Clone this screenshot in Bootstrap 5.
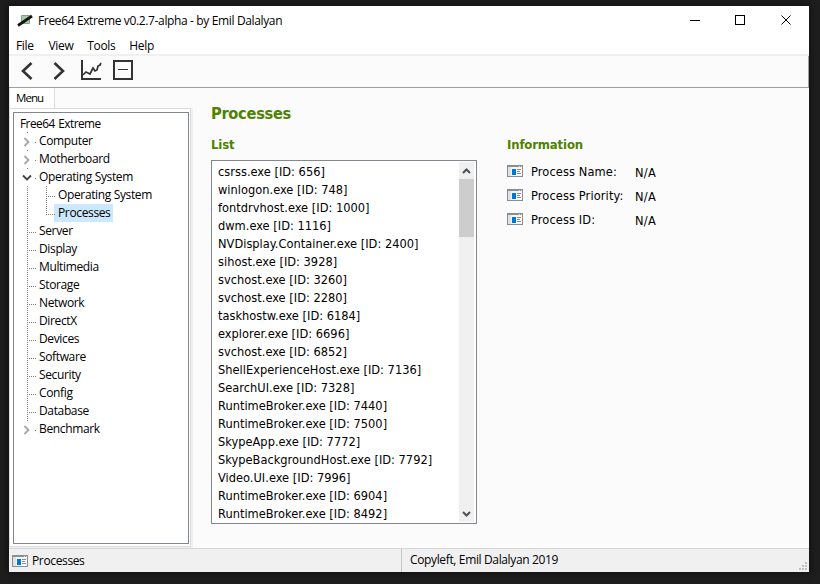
<!DOCTYPE html>
<html lang="en">
<head>
<meta charset="utf-8">
<title>Free64 Extreme</title>
<link href="https://cdn.jsdelivr.net/npm/bootstrap@5.3.0/dist/css/bootstrap.min.css" rel="stylesheet">
<style>
body{background:#1e1e1e;width:820px;height:584px;overflow:hidden;font:12px/18px "Open Sans","Noto Sans",sans-serif;letter-spacing:-.36px;color:#000}
svg{display:block;flex:none}
.app{width:800px;height:566px;margin:6px 0 0 9px;background:#fbfbfb;box-shadow:0 0 7px 1px #111}
.titlebar{height:30px;background:#fff;padding-left:8px}
.menubar{height:20px;background:#fff;border-bottom:2px solid #f0f0f0;padding-left:7px}
.menubar span{height:18px;margin-top:1px}
.m2{margin-left:15px}
.m3{margin-left:14px}
.m4{margin-left:14px}
.tools{height:32px;border-bottom:1px solid #a0a0a0;border-right:1px solid #a0a0a0}
.side{width:184px;background:#f0f0f0;height:460px}
.tabrow{height:20px;background:#fbfbfb}
.tab-menu{width:46px;height:20px;background:#fff;border-right:1px solid #dcdcdc;border-left:1px solid #dcdcdc;padding-left:6px;line-height:20px;font-size:11.5px;letter-spacing:-.95px}
.tab-menu{letter-spacing:-.95px}
.tabpage{width:182px;height:439px;background:#fff;border:1px solid #dcdcdc;padding:3px}
.tree{width:176px;height:432px;border:1px solid #828790;padding-top:1px;background:#fff}
.tree div{height:18px;padding-left:25px;white-space:nowrap}
.tree .root{padding-left:6px;font-size:11.800px;letter-spacing:-.5px;word-spacing:1px}
.tree .child{padding-left:40px}
.tree .child span{display:inline-block;padding:0 3px 0 4px;height:18px}
.tree .sel{background:#cce8ff}
.tree svg{left:0;top:0}
.tah{font-family:"DejaVu Sans Condensed","DejaVu Sans",sans-serif;font-stretch:condensed;font-size:12.700px;letter-spacing:.02px}
.green{color:#4f8200;font-family:"DejaVu Sans Condensed","DejaVu Sans",sans-serif;font-stretch:condensed;font-weight:700}
.h-main{font-size:16.300px;line-height:22px;letter-spacing:-.3px}
.h-sub{font-size:13px;line-height:18px;letter-spacing:-.15px}
.listh{margin:11px 0 6px}
.infoh{margin:33px 0 9px}
.content{padding:15px 0 0 18px}
.lst{width:266px;height:364px;border:1px solid #828790;background:#fff;padding:1px}
.lst .rows{padding:1px 0 0 5px;white-space:nowrap;overflow:hidden}
.sb{width:15px;background:#f0f0f0;margin-right:1px}
.thumb{height:58px;width:15px;background:#cdcdcd}
.info{margin-left:30px}
.info .rw{height:24px}
.info .lab{width:112px;padding-left:8px;white-space:nowrap;letter-spacing:.12px}
.ic{margin-top:2px}
.na{padding-top:1px;letter-spacing:.3px}
.status{height:24px;background:#f0f0f0;border-top:1px solid #d7d7d7}
.status .one{width:393px;border-right:1px solid #c8c8c8;padding-left:3px}
.two{padding-left:8px;line-height:22px}
</style>
<script src="https://cdn.jsdelivr.net/npm/bootstrap@5.3.0/dist/js/bootstrap.bundle.min.js"></script>
</head>
<body>
<svg width="0" height="0" class="position-absolute"><symbol id="win" viewBox="0 0 16 12"><path fill="#8a8d91" d="M0 0h16v12H0z"/><path fill="#f7f7f7" d="M1 2h14v9H1z"/><path fill="#dfe3e8" d="M1 2h3v9H1z"/><path fill="#d8d8d8" d="M12 1h1v1h-1zM14 1h1v1h-1z"/><path fill="#0078d7" d="M5 4h4v6H5z"/><path stroke="#8a8d91" d="M10 4.500h4M10 6.500h3M10 8.500h4"/></symbol></svg>
<div class="app d-flex flex-column">
  <header class="titlebar d-flex align-items-center">
    <svg width="17" height="14" viewBox="0 0 17 14"><path fill="#a9c8ae" stroke="#76a982" d="M4.500 1.500h8v8h-8z"/><path stroke="#151515" stroke-width="2.800" d="M1 11.500L15 2"/></svg>
    <span class="ms-1">Free64 Extreme v0.2.7-alpha - by Emil Dalalyan</span>
    <svg class="ms-auto" width="120" height="30" fill="none" stroke="#000" shape-rendering="crispEdges"><path d="M1 14.500h10M46.500 9.500h9v9h-9z"/><path shape-rendering="auto" d="M92.500 9.500l9 9m0-9l-9 9"/></svg>
  </header>
  <nav class="menubar d-flex"><span>File</span><span class="m2">View</span><span class="m3">Tools</span><span class="m4">Help</span></nav>
  <div class="tools">
    <svg width="140" height="31" fill="none" stroke="#333" stroke-width="2.600"><path d="M22.500 7l-8.500 8 8.500 8M45.500 7l8.500 8-8.500 8"/><path stroke="none" fill="#fff" d="M73 4h19v19H73z"/><path stroke-width="2" d="M73 4v19h19"/><path stroke-width="1.700" d="M74 19l3-3 2 1 2 1 3-6 2 3 2-1 1-4 2-1 1-2"/><path stroke-width="2" d="M105 5h18v18h-18z"/><path stroke-width="1" d="M109 13.500h10"/></svg>
  </div>
  <main class="d-flex">
    <aside class="side">
      <div class="tabrow"><div class="tab-menu">Menu</div></div>
      <div class="tabpage">
        <div class="tree position-relative">
          <svg class="position-absolute" width="50" height="430" fill="none" shape-rendering="crispEdges"><path stroke="#808080" stroke-dasharray="1 1" d="M13.500 19v2M13.500 37v2M13.500 55v2M13.500 73v236M32.500 73v29M34 83.500h7M34 101.500h7M21 29.500h1M21 47.500h1M21 65.500h1M21 317.500h1M15 119.500h7M15 137.500h7M15 155.500h7M15 173.500h7M15 191.500h7M15 209.500h7M15 227.500h7M15 245.500h7M15 263.500h7M15 281.500h7M15 299.500h7"/><g shape-rendering="auto" stroke-width="1.800" stroke="#a6a6a6"><path d="M10.500 25l4 4-4 4M10.500 43l4 4-4 4M10.500 313l4 4-4 4"/><path stroke="#404040" d="M9 62.500l4 4 4-4"/></g></svg>
          <div class="root">Free64 Extreme</div>
          <div>Computer</div><div>Motherboard</div><div>Operating System</div>
          <div class="child"><span>Operating System</span></div>
          <div class="child"><span class="sel">Processes</span></div>
          <div>Server</div><div>Display</div><div>Multimedia</div><div>Storage</div><div>Network</div><div>DirectX</div><div>Devices</div><div>Software</div><div>Security</div><div>Config</div><div>Database</div><div>Benchmark</div>
        </div>
      </div>
    </aside>
    <section class="content d-flex">
      <div>
        <div class="green h-main">Processes</div>
        <div class="green h-sub listh">List</div>
        <div class="lst tah d-flex">
          <div class="rows flex-grow-1">
            <div>csrss.exe [ID: 656]</div><div>winlogon.exe [ID: 748]</div><div>fontdrvhost.exe [ID: 1000]</div><div>dwm.exe [ID: 1116]</div><div>NVDisplay.Container.exe [ID: 2400]</div><div>sihost.exe [ID: 3928]</div><div>svchost.exe [ID: 3260]</div><div>svchost.exe [ID: 2280]</div><div>taskhostw.exe [ID: 6184]</div><div>explorer.exe [ID: 6696]</div><div>svchost.exe [ID: 6852]</div><div>ShellExperienceHost.exe [ID: 7136]</div><div>SearchUI.exe [ID: 7328]</div><div>RuntimeBroker.exe [ID: 7440]</div><div>RuntimeBroker.exe [ID: 7500]</div><div>SkypeApp.exe [ID: 7772]</div><div>SkypeBackgroundHost.exe [ID: 7792]</div><div>Video.UI.exe [ID: 7996]</div><div>RuntimeBroker.exe [ID: 6904]</div><div>RuntimeBroker.exe [ID: 8492]</div>
          </div>
          <div class="sb d-flex flex-column">
            <svg width="15" height="17" fill="none" stroke="#505050" stroke-width="2"><path d="M4 11l3.500-3.500L11 11"/></svg>
            <div class="thumb"></div>
            <svg class="mt-auto" width="15" height="17" fill="none" stroke="#505050" stroke-width="2"><path d="M4 7l3.500 3.500L11 7"/></svg>
          </div>
        </div>
      </div>
      <div class="info tah">
        <div class="green h-sub infoh">Information</div>
        <div class="rw d-flex"><svg class="ic" width="16" height="12"><use href="#win"/></svg><span class="lab">Process Name:</span><span class="na">N/A</span></div>
        <div class="rw d-flex"><svg class="ic" width="16" height="12"><use href="#win"/></svg><span class="lab">Process Priority:</span><span class="na">N/A</span></div>
        <div class="rw d-flex"><svg class="ic" width="16" height="12"><use href="#win"/></svg><span class="lab">Process ID:</span><span class="na">N/A</span></div>
      </div>
    </section>
  </main>
  <footer class="status d-flex align-items-stretch">
    <div class="one d-flex align-items-center"><svg width="16" height="12" class="me-1"><use href="#win"/></svg>Processes</div>
    <div class="two">Copyleft, Emil Dalalyan 2019</div>
    <svg class="ms-auto" width="12" height="23" fill="#bfbfbf"><path d="M8 13h2v2H8zM8 16h2v2H8zM5 16h2v2H5zM8 19h2v2H8zM5 19h2v2H5zM2 19h2v2H2z"/></svg>
  </footer>
</div>
</body>
</html>
